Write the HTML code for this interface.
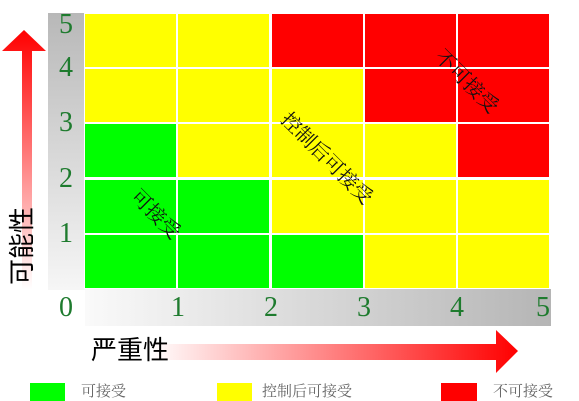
<!DOCTYPE html><html><head><meta charset="utf-8"><style>
body{margin:0;width:579px;height:401px;background:#fff;position:relative;overflow:hidden;font-family:"Liberation Serif","Noto Serif CJK SC",serif}
.a{position:absolute}
.c{position:absolute;width:91px;height:53px}
.Y{background:#ffff00}.R{background:#ff0000}.G{background:#00ff00}
.n{position:absolute;color:#1e7b2e;font-size:28px;line-height:1;transform:translate(-50%,-50%)}
.r{position:absolute;font-size:20px;transform:translate(-50%,-50%) rotate(45deg);white-space:nowrap;color:#111;font-family:"Noto Serif CJK SC",serif}
.lg{position:absolute;font-size:15px;color:#666;font-family:"Noto Serif CJK SC",serif;line-height:18px}
</style></head><body>
<div class="a" style="left:48px;top:13px;width:37px;height:277px;background:linear-gradient(#b8b8b8,#f6f6f6)"></div>
<div class="a" style="left:85px;top:289px;width:466px;height:37px;background:linear-gradient(90deg,#fafafa,#b5b5b5)"></div>
<div class="a" style="left:84px;top:13px;width:467px;height:276px;background:#fff"></div>
<div id="g"></div>
<script>
var m=["YYRRR","YYYRR","GYYYR","GGYYY","GGGYY"],h="";
for(var r=0;r<5;r++)for(var c=0;c<5;c++)h+='<div class="c '+m[r][c]+'" style="left:'+(85+c*93.3)+'px;top:'+(14+r*55.2)+'px"></div>';
document.getElementById('g').outerHTML=h;
</script>
<div class="n" style="left:66px;top:25px">5</div>
<div class="n" style="left:66px;top:68px">4</div>
<div class="n" style="left:66px;top:123px">3</div>
<div class="n" style="left:66px;top:179px">2</div>
<div class="n" style="left:66px;top:234px">1</div>
<div class="n" style="left:66px;top:308px">0</div>
<div class="n" style="left:178px;top:308px">1</div>
<div class="n" style="left:271px;top:308px">2</div>
<div class="n" style="left:364px;top:308px">3</div>
<div class="n" style="left:457px;top:308px">4</div>
<div class="n" style="left:543px;top:308px">5</div>
<div class="r" style="left:157px;top:213px">可接受</div>
<div class="r" style="left:328px;top:157px">控制后可接受</div>
<div class="r" style="left:468px;top:80px">不可接受</div>
<svg class="a" style="left:0;top:0" width="579" height="401">
<defs><linearGradient id="v" x1="0" y1="0" x2="0" y2="1"><stop offset="0" stop-color="#f00"/><stop offset="1" stop-color="#fff"/></linearGradient>
<linearGradient id="hz" x1="0" y1="0" x2="1" y2="0"><stop offset="0" stop-color="#fff"/><stop offset="1" stop-color="#f00"/></linearGradient></defs>
<polygon points="2,51 24,30 46,51 32,51 32,290 22,290 22,51" fill="url(#v)"/>
<polygon points="150,344 496,344 496,330 518,351 496,373 496,360 150,360" fill="url(#hz)"/>
</svg>
<div class="a" style="left:-20px;top:232px;width:84px;height:28px;font-size:26px;line-height:28px;text-align:center;transform:rotate(-90deg);font-family:'Liberation Sans','Noto Sans CJK SC',sans-serif;white-space:nowrap">可能性</div>
<div class="a" style="left:91px;top:336px;font-size:26px;line-height:28px;font-family:'Liberation Sans','Noto Sans CJK SC',sans-serif">严重性</div>
<div class="a G" style="left:30px;top:383px;width:35px;height:18px"></div>
<div class="lg" style="left:81px;top:382px">可接受</div>
<div class="a Y" style="left:217px;top:383px;width:35px;height:18px"></div>
<div class="lg" style="left:262px;top:382px">控制后可接受</div>
<div class="a R" style="left:441px;top:383px;width:36px;height:18px"></div>
<div class="lg" style="left:493px;top:382px">不可接受</div>
</body></html>
